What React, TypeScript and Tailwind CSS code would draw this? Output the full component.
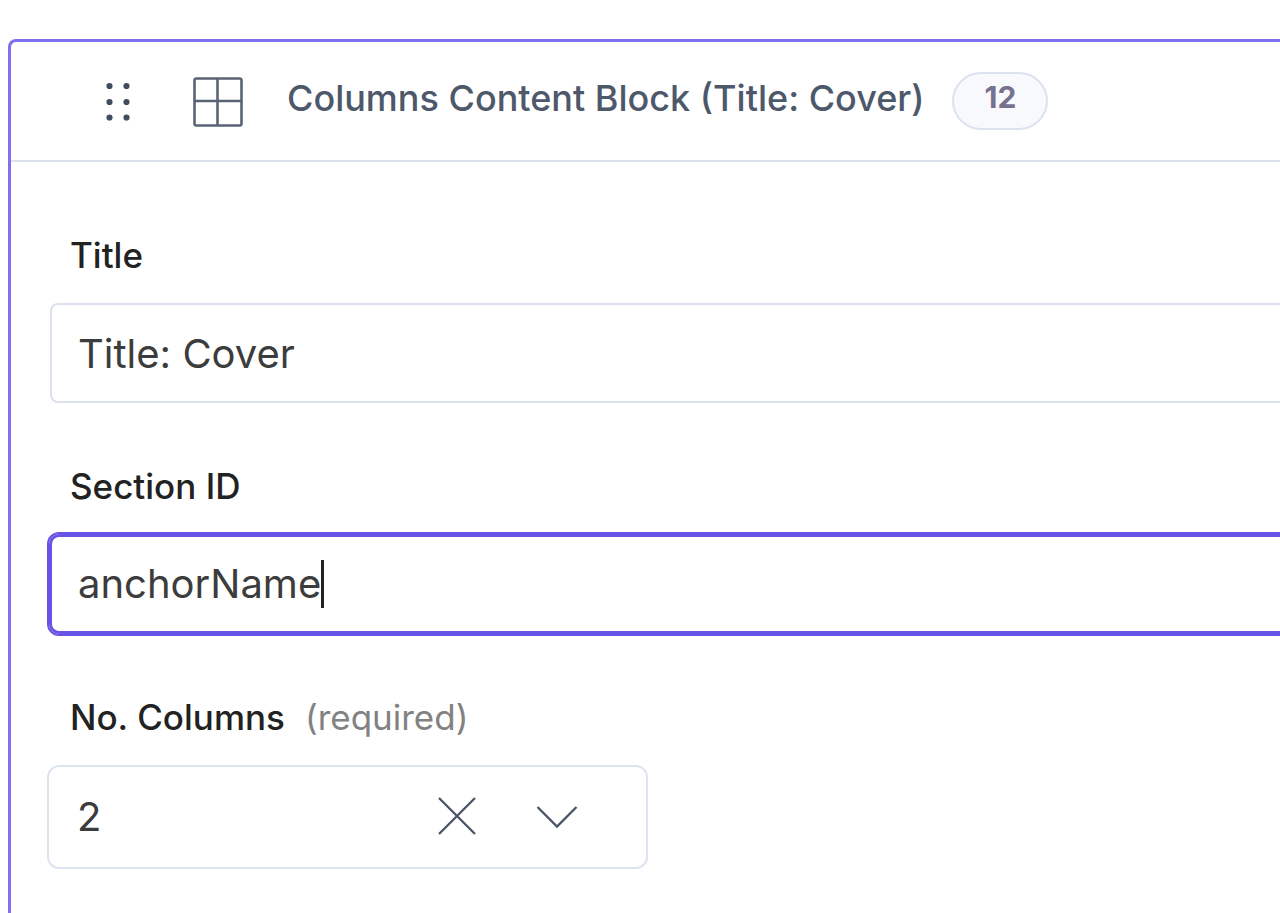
import { useState } from "react";

function GripIcon() {
  return (
    <svg width="26" height="42" viewBox="0 0 26 42" fill="#414c5e" aria-hidden="true">
      {[6, 22, 37.5].map((y) => (
        <g key={y}>
          <circle cx="4.5" cy={y} r="3.1" />
          <circle cx="21.5" cy={y} r="3.1" />
        </g>
      ))}
    </svg>
  );
}

function GridIcon() {
  return (
    <svg width="50" height="52" viewBox="0 0 50 52" fill="none" stroke="#5a6374" aria-hidden="true">
      <rect x="1.5" y="3.5" width="47" height="47" rx="2" strokeWidth="2.6" />
      <path d="M24.5 3.5V50.5M1.5 26H48.5" strokeWidth="2.6" />
    </svg>
  );
}

function CloseIcon() {
  return (
    <svg width="40" height="40" viewBox="0 0 40 40" fill="none" stroke="#4a5466" strokeWidth="2.3" aria-hidden="true">
      <path d="M2 1L38 37M38 1L2 37" />
    </svg>
  );
}

function ChevronIcon() {
  return (
    <svg width="42" height="24" viewBox="0 0 42 24" fill="none" stroke="#4a5466" strokeWidth="2.3" aria-hidden="true">
      <path d="M1.5 2L21 21.5L40.5 2" />
    </svg>
  );
}

export default function App() {
  const [title, setTitle] = useState("Title: Cover");
  const [sectionId, setSectionId] = useState("anchorName");
  const [columns, setColumns] = useState("2");

  return (
    <main className="flex min-h-screen overflow-hidden bg-white pt-[39px] pl-2 font-['Inter','Liberation_Sans',sans-serif] text-[#3c3c3c]">
      <section className="flex-1 rounded-tl-lg border-t-3 border-l-3 border-[#7f70ee]">
        <header className="flex h-[120px] items-center border-b-2 border-[#dbe2ee] pl-[94px]">
          <button type="button" aria-label="Reorder block" className="mr-[62px]">
            <GripIcon />
          </button>
          <GridIcon />
          <h1 className="ml-11 pb-1.5 text-[36px] leading-12 font-medium whitespace-nowrap text-[#4d586b]">
            Columns Content Block (Title: Cover)
          </h1>
          <span className="ml-7 flex h-[58px] w-24 shrink-0 items-center justify-center rounded-full border-2 border-[#dce3ef] bg-[#f7f9fd] pb-2 text-[30px] font-bold text-[#76718f]">
            12
          </span>
        </header>

        <form className="flex flex-col gap-[59px] pt-[69px] pl-9">
          <div className="flex flex-col gap-6">
            <label htmlFor="title" className="pl-[23px] text-[35px] leading-12 font-medium text-[#222222]">
              Title
            </label>
            <input
              id="title"
              type="text"
              value={title}
              onChange={(e) => setTitle(e.target.value)}
              className="ml-[3px] h-[100px] rounded-l-lg border-2 border-r-0 border-[#dbe2ee] pl-[26px] text-[40px] outline-none"
            />
          </div>

          <div className="flex flex-col gap-6">
            <label htmlFor="section-id" className="pl-[23px] text-[35px] leading-12 font-medium text-[#222222]">
              Section ID
            </label>
            <div className="ml-[2px] flex h-[100px] items-center rounded-l-[10px] border-3 border-r-0 border-[#6753e6] pl-[26px] ring-2 ring-[#6753e6]">
              <input
                id="section-id"
                type="text"
                value={sectionId}
                onChange={(e) => setSectionId(e.target.value)}
                className="[field-sizing:content] text-[40px] caret-transparent outline-none"
              />
              <span className="h-12 w-[3px] bg-[#222222]" aria-hidden="true" />
            </div>
          </div>

          <div className="flex flex-col gap-6">
            <div className="flex items-center gap-5 pl-[23px] text-[35px] leading-12">
              <label htmlFor="columns" className="font-medium text-[#222222]">
                No. Columns
              </label>
              <span className="text-[#828282]">(required)</span>
            </div>
            <div className="flex h-[104px] w-[601px] items-center rounded-xl border-2 border-[#dde4f0] pr-[68px] pl-7">
              <select
                id="columns"
                value={columns}
                onChange={(e) => setColumns(e.target.value)}
                className="min-w-0 flex-1 appearance-none bg-transparent text-[40px] outline-none"
              >
                <option value=""></option>
                <option value="1">1</option>
                <option value="2">2</option>
                <option value="3">3</option>
              </select>
              <button type="button" aria-label="Clear selection" onClick={() => setColumns("")} className="mr-[59px]">
                <CloseIcon />
              </button>
              <ChevronIcon />
            </div>
          </div>
        </form>
      </section>
    </main>
  );
}
